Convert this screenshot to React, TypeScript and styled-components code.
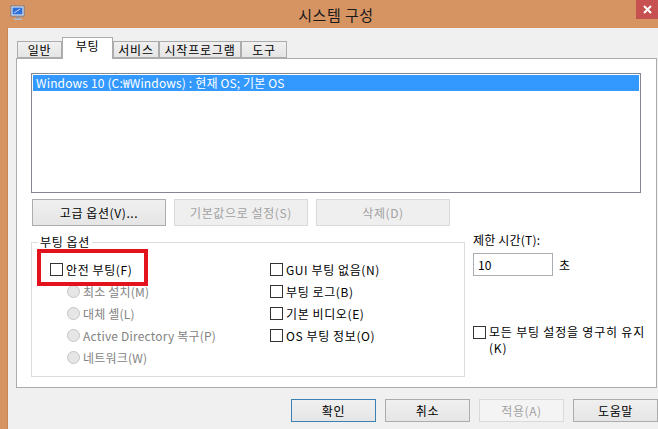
import React from 'react';
import styled, { createGlobalStyle } from 'styled-components';

const GlobalStyle = createGlobalStyle`
  html, body { margin: 0; padding: 0; }
  body {
    width: 658px; height: 429px; overflow: hidden; background: #F0F0F0;
    font-family: "Noto Sans CJK KR", "Noto Sans", sans-serif; font-size: 12px; color: #000;
  }
  *, *::before, *::after { box-sizing: border-box; }
`;

const Window = styled.div`
  width: 658px; height: 429px; display: flex; flex-direction: column;
  overflow: hidden; background: #D69463;
`;

const TitleBar = styled.div`
  height: 28px; flex: none; display: flex; align-items: flex-start; background: #D69463;
`;

const AppIcon = styled.svg`
  margin: 5px 0 0 10px; flex: none;
`;

const Title = styled.div`
  flex: 1; text-align: center; font-size: 15px; line-height: 29px;
  padding-left: 10px; color: #1a1a1a; letter-spacing: 0.5px;
`;

const CloseButton = styled.div`
  width: 22px; height: 19px; flex: none; background: #C75050;
  display: flex; align-items: center; justify-content: center;
`;

const Frame = styled.div`
  flex: 1; display: flex; min-height: 0;
`;

const Client = styled.div`
  flex: 1; margin-left: 7px; border-left: 1px solid #C4875A; background: #F0F0F0;
  display: flex; flex-direction: column;
`;

const TabStrip = styled.div`
  margin-top: 9px; height: 21px; display: flex; align-items: flex-end; padding-left: 9px;
`;

const Tab = styled.div<{ $active?: boolean; $width: number }>`
  width: ${(p) => p.$width}px;
  height: ${(p) => (p.$active ? 22 : 17)}px;
  margin-bottom: ${(p) => (p.$active ? -1 : 0)}px;
  padding-top: ${(p) => (p.$active ? 1 : 0)}px;
  border: 1px solid #ACACAC;
  border-bottom: ${(p) => (p.$active ? 'none' : '1px solid #ACACAC')};
  background: ${(p) => (p.$active ? '#FFFFFF' : 'linear-gradient(#F0F0F0, #E5E5E5)')};
  position: relative; z-index: ${(p) => (p.$active ? 2 : 1)};
  text-align: center; line-height: ${(p) => (p.$active ? 14 : 15)}px;
  letter-spacing: 0.8px; white-space: nowrap;
`;

const Panel = styled.div`
  margin-left: 8px; width: 641px; height: 330px; flex: none;
  border: 1px solid #ACACAC; background: #FFFFFF;
  padding: 14px 0 0 14px; position: relative; z-index: 1;
  display: flex; flex-direction: column;
`;

const ListBox = styled.div`
  width: 610px; height: 120px; border: 1px solid #828790; background: #FFFFFF; padding: 1px;
`;

const ListItem = styled.div<{ $selected?: boolean }>`
  height: 16px; line-height: 16px; padding-left: 3px;
  background: ${(p) => (p.$selected ? '#3399FF' : 'transparent')};
  color: ${(p) => (p.$selected ? '#FFFFFF' : '#000')};
  letter-spacing: 0.15px; white-space: nowrap;
`;

const ActionRow = styled.div`
  margin-top: 6px; display: flex; gap: 8px; padding-left: 1px;
`;

const ActionButton = styled.div<{ $disabled?: boolean }>`
  width: 134px; height: 27px; display: flex; align-items: center; justify-content: center;
  border: 1px solid ${(p) => (p.$disabled ? '#D9D9D9' : '#ACACAC')};
  background: ${(p) => (p.$disabled ? '#EFEFEF' : 'linear-gradient(#F0F0F0, #E5E5E5)')};
  color: ${(p) => (p.$disabled ? '#A2A2A2' : '#000')};
  letter-spacing: 0.6px;
`;

const OptionsRow = styled.div`
  margin-top: 8px; display: flex; align-items: flex-start;
`;

const GroupBox = styled.fieldset`
  width: 434px; margin: 0; padding: 0; min-width: 0;
  border: 1px solid #DCDCDC;
`;

const Legend = styled.legend`
  margin-left: 6px; padding: 0 2px; line-height: 16px; letter-spacing: 0.6px;
`;

const OptionGrid = styled.div`
  display: grid; grid-template-columns: 220px 1fr; padding: 8px 0 8px 18px;
`;

const Column = styled.div`
  display: flex; flex-direction: column;
`;

const CheckRow = styled.div`
  height: 22px; display: flex; align-items: center; gap: 3px; white-space: nowrap;
  letter-spacing: 0.6px;
`;

const Highlighted = styled(CheckRow)`
  position: relative;
  &::after {
    content: ''; position: absolute; top: -9px; left: -13px; width: 111px; height: 37px;
    border: 4px solid #E3131E;
  }
`;

const CheckBox = styled.span`
  width: 13px; height: 13px; flex: none; border: 1px solid #333333; background: #FFFFFF;
`;

const RadioRow = styled.div`
  height: 22px; display: flex; align-items: center; gap: 3px; margin-left: 17px;
  color: #838383; white-space: nowrap; letter-spacing: 0.2px;
`;

const Radio = styled.span`
  width: 13px; height: 13px; flex: none; border-radius: 50%;
  border: 1px solid #C4C4C4; background: #E6E6E6;
`;

const TimeoutColumn = styled.div`
  margin-left: 8px; display: flex; flex-direction: column;
`;

const TimeoutLabel = styled.div`
  line-height: 12px; letter-spacing: 0.2px;
`;

const TimeoutRow = styled.div`
  margin-top: 7px; display: flex; align-items: center; gap: 6px;
`;

const TextInput = styled.div`
  width: 80px; height: 23px; border: 1px solid #ABADB3; background: #FFFFFF;
  padding-left: 4px; line-height: 21px;
`;

const KeepRow = styled.div`
  margin-top: 48px; display: flex; align-items: flex-start; gap: 3px;
`;

const KeepBox = styled(CheckBox)`
  margin-top: 2px;
`;

const KeepText = styled.div`
  line-height: 16px; white-space: nowrap; letter-spacing: 0.8px;
`;

const ButtonBar = styled.div`
  margin-top: 11px; display: flex; gap: 9px; padding-left: 283px;
`;

const DialogButton = styled.div<{ $default?: boolean; $disabled?: boolean }>`
  width: 85px; height: 23px; flex: none; display: flex; align-items: center; justify-content: center;
  border: 1px solid ${(p) => (p.$default ? '#3C7FB1' : p.$disabled ? '#D9D9D9' : '#ACACAC')};
  background: ${(p) => (p.$disabled ? '#F4F4F4' : 'linear-gradient(#F0F0F0, #E5E5E5)')};
  color: ${(p) => (p.$disabled ? '#A2A2A2' : '#000')};
  letter-spacing: 0.6px;
`;

const tabs: [string, number][] = [
  ['일반', 45],
  ['부팅', 51],
  ['서비스', 46],
  ['시작프로그램', 82],
  ['도구', 46],
];
const radios = ['최소 설치(M)', '대체 셸(L)', 'Active Directory 복구(P)', '네트워크(W)'];
const rightChecks = ['GUI 부팅 없음(N)', '부팅 로그(B)', '기본 비디오(E)', 'OS 부팅 정보(O)'];

export default function App() {
  return (
    <>
      <GlobalStyle />
      <Window>
        <TitleBar>
          <AppIcon width="16" height="16" viewBox="0 0 16 16">
            <rect x="1" y="1" width="13" height="10" fill="#F4F6FA" stroke="#6B7B99" strokeWidth="1" />
            <rect x="2.5" y="2.5" width="10" height="7" fill="#2F6FD8" />
            <path d="M4 8 L10 4" stroke="#BFD8FF" strokeWidth="1" />
            <rect x="6" y="11.5" width="4" height="2" fill="#8C96A6" />
            <rect x="4" y="13.5" width="8" height="1.5" fill="#B7BEC9" />
          </AppIcon>
          <Title>시스템 구성</Title>
          <CloseButton>
            <svg width="9" height="9" viewBox="0 0 9 9">
              <path d="M1 1 L8 8 M8 1 L1 8" stroke="#FFFFFF" strokeWidth="2" />
            </svg>
          </CloseButton>
        </TitleBar>
        <Frame>
          <Client>
            <TabStrip>
              {tabs.map(([t, w]) => (
                <Tab key={t} $width={w} $active={t === '부팅'}>{t}</Tab>
              ))}
            </TabStrip>
            <Panel>
              <ListBox>
                <ListItem $selected>Windows 10 (C:₩Windows) : 현재 OS; 기본 OS</ListItem>
              </ListBox>
              <ActionRow>
                <ActionButton>고급 옵션(V)...</ActionButton>
                <ActionButton $disabled>기본값으로 설정(S)</ActionButton>
                <ActionButton $disabled>삭제(D)</ActionButton>
              </ActionRow>
              <OptionsRow>
                <GroupBox>
                  <Legend>부팅 옵션</Legend>
                  <OptionGrid>
                    <Column>
                      <Highlighted>
                        <CheckBox />
                        안전 부팅(F)
                      </Highlighted>
                      {radios.map((r) => (
                        <RadioRow key={r}>
                          <Radio />
                          {r}
                        </RadioRow>
                      ))}
                    </Column>
                    <Column>
                      {rightChecks.map((c) => (
                        <CheckRow key={c}>
                          <CheckBox />
                          {c}
                        </CheckRow>
                      ))}
                    </Column>
                  </OptionGrid>
                </GroupBox>
                <TimeoutColumn>
                  <TimeoutLabel>제한 시간(T):</TimeoutLabel>
                  <TimeoutRow>
                    <TextInput>10</TextInput>
                    초
                  </TimeoutRow>
                  <KeepRow>
                    <KeepBox />
                    <KeepText>
                      모든 부팅 설정을 영구히 유지
                      <br />
                      (K)
                    </KeepText>
                  </KeepRow>
                </TimeoutColumn>
              </OptionsRow>
            </Panel>
            <ButtonBar>
              <DialogButton $default>확인</DialogButton>
              <DialogButton>취소</DialogButton>
              <DialogButton $disabled>적용(A)</DialogButton>
              <DialogButton>도움말</DialogButton>
            </ButtonBar>
          </Client>
        </Frame>
      </Window>
    </>
  );
}
